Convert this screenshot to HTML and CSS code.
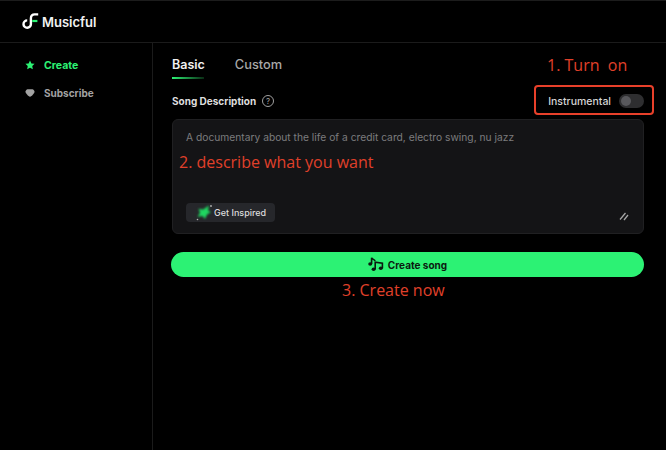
FILE: index.html
```html
<!DOCTYPE html>
<html lang="en">
<head>
    <meta charset="UTF-8">
    <meta name="viewport" content="width=device-width, initial-scale=1.0">
    <title>Musicful - Create</title>
    <link rel="stylesheet" href="styles.css">
</head>
<body>
    <header class="topbar">
        <svg class="logo" viewBox="0 0 17 17" width="17" height="17" fill="none">
            <path d="M8.9 11V5.2C8.9 2.6 10.4 1.4 12.6 1.4h3.6" stroke="#fff" stroke-width="2.4"/>
            <path d="M8.9 11a3.7 3.7 0 1 1-3.7-3.6" stroke="#fff" stroke-width="2.4"/>
            <path d="M10.2 8h5.2" stroke="#2cf274" stroke-width="2.2"/>
        </svg>
        <span class="brand">Musicful</span>
    </header>

    <div class="layout">
        <!-- Side menu -->
        <nav class="sidebar">
            <a class="nav-item active">
                <svg viewBox="0 0 12 12" width="10" height="10"><path d="M6 .6l1.7 3.5 3.8.5-2.8 2.6.7 3.8L6 9.2l-3.4 1.8.7-3.8L.5 4.6l3.8-.5z" fill="currentColor"/></svg>
                Create
            </a>
            <a class="nav-item">
                <svg viewBox="0 0 12 12" width="10" height="10"><path d="M3 1.500h6c1 0 2.500 1.800 2.500 3 0 1-3.500 6-5.500 6S.5 5.500.5 4.500c0-1.200 1.500-3 2.500-3z" fill="currentColor"/></svg>
                Subscribe
            </a>
        </nav>

        <main class="content">
            <div class="tabs">
                <div class="tab current">Basic</div>
                <div class="tab">Custom</div>
            </div>

            <div class="form-head">
                <div class="label">
                    Song Description
                    <span class="help">?</span>
                </div>
                <div class="instrumental">
                    Instrumental
                    <span class="toggle"><span class="knob"></span></span>
                </div>
            </div>

            <div class="prompt">
                <p class="placeholder">A documentary about the life of a credit card, electro swing, nu jazz</p>
                <button class="inspired">
                    <svg viewBox="0 0 20 20" width="20" height="20">
                        <path class="spark" d="M15 2.500l-1 5 3 1.500-4 2.500-2 4.500-2.500-3-5 .8 2.500-4-1.500-4 4.500.8z" fill="#1fd760"/>
                        <circle cx="17" cy="3" r=".9" fill="#b5b5b5"/>
                        <circle cx="3.500" cy="16.500" r=".8" fill="#b5b5b5"/>
                    </svg>
                    Get Inspired
                </button>
                <svg class="grip" viewBox="0 0 10 10" width="10" height="10" fill="none">
                    <path d="M1 8.500L6.500 2M5 9l4-5" stroke="#a5a5a5" stroke-width="1.300"/>
                </svg>
            </div>

            <button class="create">
                <svg viewBox="0 0 16 15" width="16" height="15" fill="none">
                    <ellipse cx="2.200" cy="7" rx="2" ry="1.700" fill="#0b1a10"/>
                    <path d="M3.600 7V.8C4 2.500 6.800 2.300 7 4" stroke="#0b1a10" stroke-width="1.600"/>
                    <ellipse cx="5.600" cy="12.300" rx="2" ry="1.700" fill="#0b1a10"/>
                    <ellipse cx="12.800" cy="11.300" rx="2" ry="1.700" fill="#0b1a10"/>
                    <path d="M7.200 12.300V5.200l7.200 1v5.100" stroke="#0b1a10" stroke-width="1.600"/>
                </svg>
                Create song
            </button>
        </main>
    </div>

    <!-- Red notes drawn over the page -->
    <div class="note note-one">1. Turn&nbsp; on</div>
    <div class="note-box"></div>
    <div class="note note-two">2. describe what you want</div>
    <div class="note note-three">3. Create now</div>
</body>
</html>
```

FILE: styles.css
```css
html, body {
    height: 100%;
}
body {
    margin: 0;
    padding: 0;
    background-color: #000;
    color: #fff;
    font-family: Inter, "Liberation Sans", sans-serif;
    overflow: hidden;
}
.topbar {
    height: 41px;
    border-top: 1px solid #1c1c1c;
    border-bottom: 1px solid #1b1b1b;
    display: flex;
    align-items: center;
    padding-left: 22px;
    gap: 3px;
}
.brand {
    font-size: 13px;
    font-weight: 600;
    color: #f2f2f2;
}
.layout {
    display: flex;
    height: 407px;
}
.sidebar {
    width: 127px;
    flex-shrink: 0;
    border-right: 1px solid #1b1b1b;
    padding: 17px 0 0 25px;
    display: flex;
    flex-direction: column;
    gap: 18px;
}
.nav-item {
    display: flex;
    align-items: center;
    gap: 9px;
    height: 10px;
    font-size: 10px;
    font-weight: 700;
    color: #a3a3a3;
}
.nav-item.active {
    color: #2cf274;
    font-size: 10.500px;
}
.content {
    width: 473px;
    margin-left: 18px;
}
.tabs {
    display: flex;
    gap: 30px;
    height: 36px;
    padding: 14px 0 0 1px;
    box-sizing: border-box;
}
.tab {
    font-size: 12.800px;
    font-weight: 500;
    color: #a8a8a8;
}
.tab.current {
    color: #f0f0f0;
    font-weight: 600;
    font-size: 12.500px;
    position: relative;
}
.tab.current::after {
    content: "";
    position: absolute;
    left: 0;
    bottom: 0;
    width: 32px;
    height: 2px;
    background: linear-gradient(90deg, #2cf274, #0a2b14);
}
.form-head {
    display: flex;
    justify-content: space-between;
    align-items: center;
    height: 16px;
    margin-top: 14px;
    padding-left: 1px;
}
.label {
    display: flex;
    align-items: center;
    gap: 6px;
    font-size: 10px;
    font-weight: 700;
    color: #dedede;
}
.help {
    width: 10px;
    height: 10px;
    border: 1px solid #a0a0a0;
    border-radius: 50%;
    font-size: 8px;
    font-weight: 400;
    color: #a0a0a0;
    display: flex;
    align-items: center;
    justify-content: center;
}
.instrumental {
    display: flex;
    align-items: center;
    gap: 8px;
    font-size: 10.500px;
    font-weight: 500;
    color: #d6d6d6;
}
.toggle {
    width: 25px;
    height: 14px;
    border-radius: 7px;
    background-color: #2e2e30;
    display: flex;
    align-items: center;
    padding-left: 2px;
    box-sizing: border-box;
}
.knob {
    width: 10px;
    height: 10px;
    border-radius: 50%;
    background-color: #58585c;
}
.prompt {
    height: 115px;
    margin: 10px 0 0 1px;
    background-color: #141416;
    border: 1px solid #202022;
    border-radius: 6px;
    box-sizing: border-box;
    padding: 11px 13px 11px 13px;
    display: flex;
    flex-direction: column;
    align-items: flex-start;
    position: relative;
}
.placeholder {
    margin: 0;
    font-size: 10.250px;
    color: #7c7c7e;
}
.inspired {
    margin-top: auto;
    height: 19px;
    padding: 0 9px 0 8px;
    background-color: #26272b;
    border: none;
    border-radius: 4px;
    color: #dcdcdc;
    font-family: inherit;
    font-size: 9px;
    font-weight: 500;
    display: flex;
    align-items: center;
    gap: 0;
}
.spark {
    filter: blur(0.8px);
}
.grip {
    position: absolute;
    right: 14px;
    bottom: 12px;
}
.create {
    display: flex;
    align-items: center;
    justify-content: center;
    gap: 4px;
    width: 473px;
    height: 25px;
    margin-top: 18px;
    background-color: #2cf274;
    border: none;
    border-radius: 13px;
    color: #0b1a10;
    font-family: inherit;
    font-size: 10px;
    font-weight: 700;
}
.note {
    position: absolute;
    color: #e0402a;
    font-family: "Open Sans", "Noto Sans", sans-serif;
    font-size: 16px;
    line-height: 20px;
    white-space: nowrap;
}
.note-one {
    left: 547px;
    top: 55px;
}
.note-two {
    left: 179px;
    top: 152px;
}
.note-three {
    left: 342px;
    top: 280px;
}
.note-box {
    position: absolute;
    left: 534px;
    top: 85px;
    width: 116px;
    height: 26px;
    border: 2px solid #e8402a;
    border-radius: 4px;
}
```
